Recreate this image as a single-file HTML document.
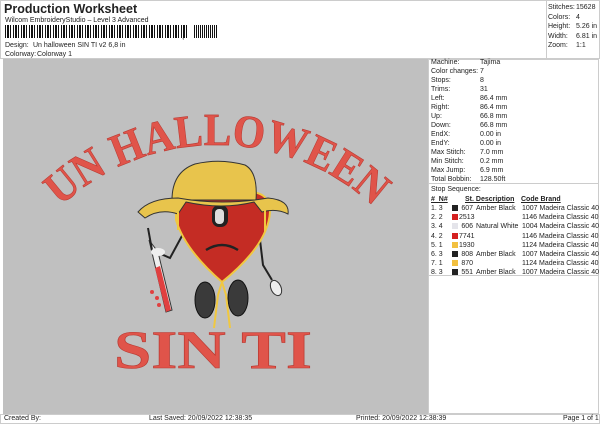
<!DOCTYPE html>
<html><head><meta charset="utf-8"><style>
*{margin:0;padding:0;box-sizing:border-box}
body{width:600px;height:424px;background:#fff;font-family:"Liberation Sans",sans-serif;font-size:7px;color:#222;position:relative;overflow:hidden}
.a{position:absolute;white-space:nowrap;line-height:9px}
.bc{position:absolute;left:5px;top:25px;width:183px;height:13px;background:repeating-linear-gradient(90deg,#111 0 1px,#fff 1px 2px,#111 2px 3px,#111 3px 4px,#fff 4px 5px,#111 5px 6px,#fff 6px 7px,#fff 7px 8px)}
.sw{display:inline-block;width:6px;height:6px;vertical-align:-1px}
</style></head><body>
<div style="position:absolute;left:0;top:0;width:600px;height:59px;border:1px solid #ccc"></div>
<div style="position:absolute;left:546px;top:0;width:1px;height:59px;background:#ccc"></div>
<div class="a" style="left:4px;top:2px;font-size:12.5px;font-weight:bold;line-height:14px">Production Worksheet</div>
<div class="a" style="left:5px;top:16px">Wilcom EmbroideryStudio – Level 3 Advanced</div>
<div class="bc"></div>
<div class="a" style="left:182px;top:32px;font-size:8px">,</div>
<div class="a" style="left:194px;top:25px;width:24px;height:13px;background:repeating-linear-gradient(90deg,#111 0 1px,#fff 1px 2px,#111 2px 3px,#fff 3px 4px)"></div>
<div class="a" style="left:5px;top:41px">Design:</div><div class="a" style="left:33px;top:41px">Un halloween SIN TI v2 6,8 in</div>
<div class="a" style="left:5px;top:50px">Colorway:</div><div class="a" style="left:37px;top:50px">Colorway 1</div>
<div class="a" style="left:548px;top:3px;line-height:9.5px">Stitches:<br>Colors:<br>Height:<br>Width:<br>Zoom:</div>
<div class="a" style="left:576px;top:3px;line-height:9.5px">15628<br>4<br>5.26 in<br>6.81 in<br>1:1</div>
<div style="position:absolute;left:3px;top:59px;width:425px;height:355px;background:#c0c0c0"></div>
<div style="position:absolute;left:428px;top:59px;width:171px;height:355px;border:1px solid #ccc"></div>
<div style="position:absolute;left:429px;top:183px;width:170px;height:1px;background:#ccc"></div>
<div style="position:absolute;left:429px;top:275px;width:170px;height:1px;background:#ccc"></div>
<div class="a" style="left:431px;top:58px;line-height:9px">Machine:<br>Color changes:<br>Stops:<br>Trims:<br>Left:<br>Right:<br>Up:<br>Down:<br>EndX:<br>EndY:<br>Max Stitch:<br>Min Stitch:<br>Max Jump:<br>Total Bobbin:</div>
<div class="a" style="left:480px;top:58px;line-height:9px">Tajima<br>7<br>8<br>31<br>86.4 mm<br>86.4 mm<br>66.8 mm<br>66.8 mm<br>0.00 in<br>0.00 in<br>7.0 mm<br>0.2 mm<br>6.9 mm<br>128.50ft</div>
<div class="a" style="left:431px;top:185px">Stop Sequence:</div>
<div class="a" style="left:431px;top:195px;font-weight:bold;text-decoration:underline">#&nbsp; N#</div>
<div class="a" style="left:465px;top:195px;font-weight:bold;text-decoration:underline">St. Description</div>
<div class="a" style="left:521px;top:195px;font-weight:bold;text-decoration:underline">Code Brand</div>
<div class="a" style="left:431px;top:204px;line-height:9.2px">1. 3<br>2. 2<br>3. 4<br>4. 2<br>5. 1<br>6. 3<br>7. 1<br>8. 3</div>
<div class="a" style="left:452px;top:204px;line-height:9.2px"><span class="sw" style="background:#222"></span><br><span class="sw" style="background:#d42020"></span><br><span class="sw" style="background:#e4e4ea"></span><br><span class="sw" style="background:#d42020"></span><br><span class="sw" style="background:#f2c040"></span><br><span class="sw" style="background:#222"></span><br><span class="sw" style="background:#f2c040"></span><br><span class="sw" style="background:#222"></span></div>
<div class="a" style="left:459px;top:204px;line-height:9.2px;text-align:right;width:14px">607<br>2513<br>606<br>7741<br>1930<br>808<br>870<br>551</div>
<div class="a" style="left:476px;top:204px;line-height:9.2px">Amber Black<br><br>Natural White<br><br><br>Amber Black<br><br>Amber Black</div>
<div class="a" style="left:522px;top:204px;line-height:9.2px">1007 Madeira Classic 40<br>1146 Madeira Classic 40<br>1004 Madeira Classic 40<br>1146 Madeira Classic 40<br>1124 Madeira Classic 40<br>1007 Madeira Classic 40<br>1124 Madeira Classic 40<br>1007 Madeira Classic 40</div>
<div style="position:absolute;left:0;top:414px;width:600px;height:10px;border:1px solid #ccc"></div>
<div class="a" style="left:4px;top:414px">Created By:</div>
<div class="a" style="left:149px;top:414px">Last Saved: 20/09/2022 12:38:35</div>
<div class="a" style="left:356px;top:414px">Printed: 20/09/2022 12:38:39</div>
<div class="a" style="left:563px;top:414px">Page 1 of 1</div>

<svg style="position:absolute;left:0;top:0" width="600" height="424">
<defs><path id="arc" d="M -13 375 A 230 230 0 0 1 447 375"/></defs>
<text font-family="Liberation Serif,serif" font-weight="bold" font-size="46" fill="#e0544a" stroke="#b83a32" stroke-width="0.6"><textPath href="#arc" startOffset="50%" text-anchor="middle" textLength="345" lengthAdjust="spacingAndGlyphs">UN HALLOWEEN</textPath></text>
<text x="114" y="368" font-family="Liberation Serif,serif" font-weight="bold" font-size="54" fill="#e0544a" stroke="#b83a32" stroke-width="0.6" textLength="198" lengthAdjust="spacingAndGlyphs">SIN  TI</text>
<ellipse cx="205" cy="300" rx="10" ry="18" fill="#3a3a3a" stroke="#111"/>
<ellipse cx="238" cy="298" rx="10" ry="18" fill="#3a3a3a" stroke="#111"/>
<path d="M149 240 L166 312 L172 310 L158 252 Z" fill="#eee" stroke="#333" stroke-width="1"/>
<path d="M155 268 L166 312 L171 310 L160 266 Z" fill="#e04040"/>
<circle cx="152" cy="292" r="2" fill="#e04040"/><circle cx="157" cy="298" r="2" fill="#e04040"/><circle cx="159" cy="305" r="2" fill="#e04040"/>
<path d="M148 228 L152 250 L170 258 L183 234" fill="none" stroke="#222" stroke-width="2"/>
<ellipse cx="158" cy="252" rx="7" ry="4" fill="#eee"/>
<path d="M260 240 L263 265 L272 280" fill="none" stroke="#222" stroke-width="2"/>
<ellipse cx="276" cy="288" rx="5" ry="8" fill="#eee" stroke="#333" transform="rotate(-25 276 288)"/>
<path d="M176 205 Q176 190 200 192 Q222 195 244 192 Q270 190 270 212 Q268 245 222 282 Q185 250 176 220 Z" fill="#c42c24" stroke="#f0c840" stroke-width="2"/>
<path d="M222 282 L218 295 L214 328 M222 282 L226 295 L230 328" fill="none" stroke="#f0c840" stroke-width="2"/>
<rect x="212" y="205" width="16" height="22" rx="7" fill="#222"/><rect x="215" y="209" width="9" height="15" rx="4" fill="#ddd"/>
<path d="M206 250 Q222 240 238 250" fill="none" stroke="#222" stroke-width="2.5"/>
<path d="M172 200 Q172 172 195 164 Q220 158 245 165 Q258 172 256 200 Z" fill="#e8c44c" stroke="#333" stroke-width="1"/>
<path d="M138 212 Q150 198 178 198 Q222 206 268 198 Q290 200 288 214 Q276 208 262 212 L254 202 Q222 210 186 202 L178 214 Q160 208 145 218 Z" fill="#e8c44c" stroke="#333" stroke-width="1"/>
<path d="M178 212 L178 230 M265 210 L265 232" stroke="#f0c840" stroke-width="2"/>
</svg>
</body></html>
